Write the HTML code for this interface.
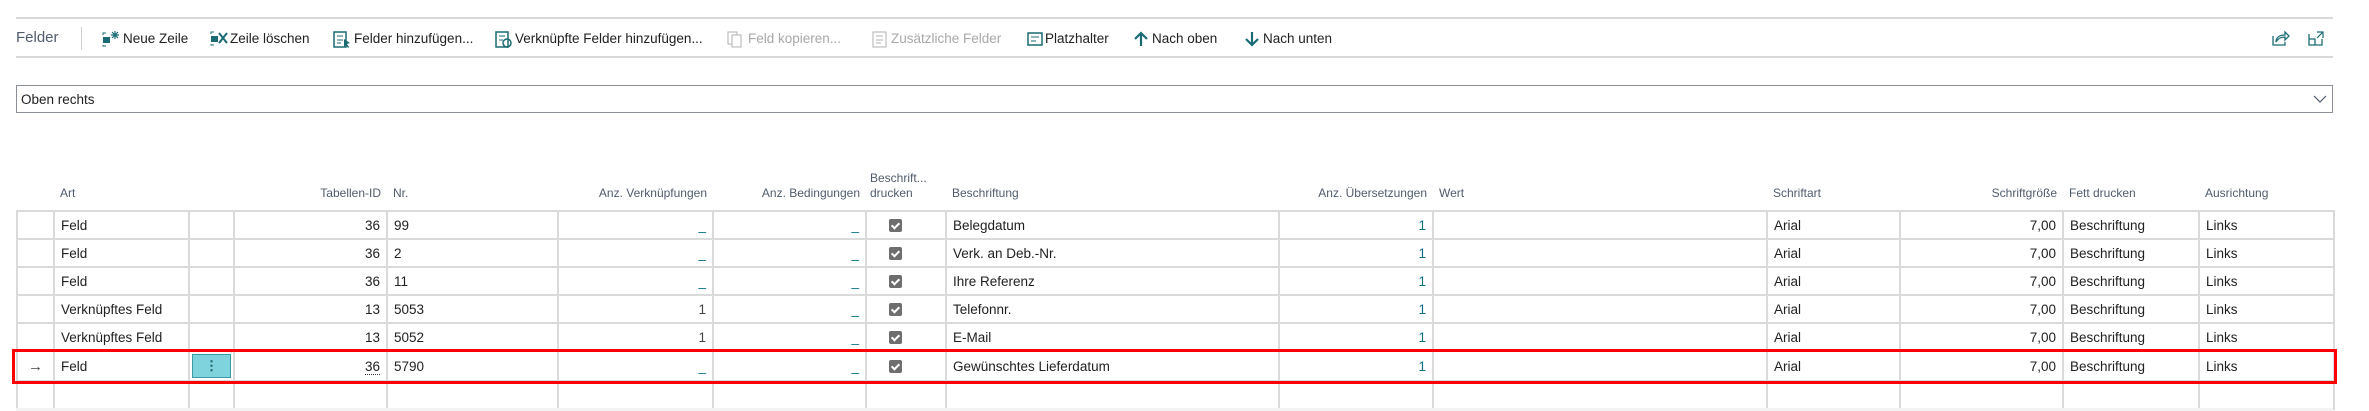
<!DOCTYPE html>
<html><head><meta charset="utf-8">
<style>
*{margin:0;padding:0;box-sizing:border-box}
body{width:2369px;height:411px;background:#fff;font-family:"Liberation Sans",sans-serif;color:#212121;position:relative;overflow:hidden}
.a{position:absolute;white-space:nowrap}
.hl{position:absolute;left:16px;width:2317px;height:2px;background:#d9d9d9}
.tb{font-size:13.5px;top:31px;color:#212121}
.dis{color:#a8a8a8}
.ic{position:absolute;top:31px}
table{position:absolute;left:16px;top:170px;border-collapse:collapse;table-layout:fixed;width:2317px}
th{font-weight:normal;font-size:12px;color:#505c6d;height:41px;vertical-align:bottom;padding:0 6px 9px 6px;text-align:left;white-space:nowrap;line-height:15px}
td{height:28px;border:2px solid #dadada;font-size:13.5px;padding:0 6px;white-space:nowrap;vertical-align:middle}
tr.h th{border:none}
tbody tr:first-child td{border-top:2px solid #dadada}
td:first-child{border-left:2px solid #dadada}
.r{text-align:right}
.u{text-align:right;color:#0b7285}
.cb{display:inline-block;width:13px;height:13px;background:#6e6e6e;border-radius:2px;position:relative;top:2px}
.cb:after{content:"";position:absolute;left:4px;top:2px;width:3px;height:6px;border:solid #fff;border-width:0 2px 2px 0;transform:rotate(45deg)}
</style></head><body>
<div class="hl" style="top:17px"></div>
<div class="hl" style="top:56px"></div>
<div class="a" style="left:16px;top:29px;font-size:15px;color:#505c6d">Felder</div>
<div class="a" style="left:81px;top:27px;width:1px;height:23px;background:#d0d0d0"></div>

<svg class="ic" style="left:102px" width="18" height="16" viewBox="0 0 18 16"><rect x="1" y="6" width="7" height="6" fill="#1a6b73"/><path d="M1 4v-2h3M1 14v1h3" stroke="#1a6b73" fill="none"/><path d="M13 0v8M9 4h8M10 1l6 6M16 1l-6 6" stroke="#1a6b73" stroke-width="1.2"/></svg>
<div class="a tb" style="left:123px">Neue Zeile</div>
<svg class="ic" style="left:210px" width="18" height="16" viewBox="0 0 18 16"><rect x="1" y="5" width="7" height="6" fill="#1a6b73"/><path d="M1 3v-2h3M1 13v1h3" stroke="#1a6b73" fill="none"/><path d="M9 2l8 10M17 2l-8 10" stroke="#1a6b73" stroke-width="2"/></svg>
<div class="a tb" style="left:230px">Zeile löschen</div>
<svg class="ic" style="left:333px" width="18" height="17" viewBox="0 0 18 17"><rect x="1" y="1" width="12" height="15" fill="none" stroke="#1a6b73" stroke-width="1.5"/><path d="M4 5h6M4 9h6M4 12h4" stroke="#1a6b73"/><path d="M11 8l6 4-3 1 2 3-1 1-2-3-2 2z" fill="#1a6b73"/></svg>
<div class="a tb" style="left:354px">Felder hinzufügen...</div>
<svg class="ic" style="left:495px" width="18" height="17" viewBox="0 0 18 17"><rect x="1" y="1" width="12" height="15" fill="none" stroke="#1a6b73" stroke-width="1.5"/><path d="M4 5h6M4 9h4" stroke="#1a6b73"/><circle cx="12" cy="12" r="4" fill="none" stroke="#1a6b73" stroke-width="1.5"/></svg>
<div class="a tb" style="left:515px">Verknüpfte Felder hinzufügen...</div>
<svg class="ic" style="left:727px" width="16" height="17" viewBox="0 0 16 17"><rect x="1" y="1" width="9" height="12" fill="none" stroke="#b0b0b0"/><rect x="5" y="4" width="9" height="12" fill="#fff" stroke="#b0b0b0"/></svg>
<div class="a tb dis" style="left:748px">Feld kopieren...</div>
<svg class="ic" style="left:872px" width="16" height="17" viewBox="0 0 16 17"><rect x="1" y="1" width="13" height="15" fill="none" stroke="#b0b0b0"/><path d="M4 5h7M4 9h7M4 12h5" stroke="#b0b0b0"/></svg>
<div class="a tb dis" style="left:891px">Zusätzliche Felder</div>
<svg class="ic" style="left:1027px" width="16" height="16" viewBox="0 0 16 16"><rect x="1" y="2" width="14" height="12" fill="none" stroke="#1a6b73" stroke-width="1.5"/><path d="M4 6h8M4 10h5" stroke="#1a6b73"/></svg>
<div class="a tb" style="left:1045px">Platzhalter</div>
<svg class="ic" style="left:1134px" width="14" height="16" viewBox="0 0 14 16"><path d="M7 15V2M1 8l6-6 6 6" stroke="#1a6b73" stroke-width="2.2" fill="none"/></svg>
<div class="a tb" style="left:1152px">Nach oben</div>
<svg class="ic" style="left:1245px" width="14" height="16" viewBox="0 0 14 16"><path d="M7 1v13M1 8l6 6 6-6" stroke="#1a6b73" stroke-width="2.2" fill="none"/></svg>
<div class="a tb" style="left:1263px">Nach unten</div>

<svg class="a" style="left:2272px;top:30px" width="18" height="16" viewBox="0 0 18 16"><path d="M1 6v9h12v-3" stroke="#1a6b73" stroke-width="1.3" fill="none"/><path d="M4 12c0-5 4-7 9-7V2l4 4-4 4V7c-4 0-7 1-9 5z" fill="none" stroke="#1a6b73" stroke-width="1.3"/></svg>
<svg class="a" style="left:2308px;top:31px" width="16" height="15" viewBox="0 0 16 15"><path d="M1 3v11h13V8M1 8h6v6" stroke="#1a6b73" stroke-width="1.3" fill="none"/><path d="M9 1h6v6M15 1l-6 6" stroke="#1a6b73" stroke-width="1.2" fill="none"/></svg>

<div class="a" style="left:16px;top:85px;width:2317px;height:28px;border:1px solid #8a8f99"></div>
<div class="a" style="left:21px;top:92px;font-size:13.5px">Oben rechts</div>
<svg class="a" style="left:2313px;top:95px" width="14" height="9" viewBox="0 0 14 9"><path d="M1 1l6 6 6-6" stroke="#505c6d" stroke-width="1.2" fill="none"/></svg>

<table>
<colgroup><col style="width:37px"><col style="width:135px"><col style="width:45px"><col style="width:153px"><col style="width:171px"><col style="width:155px"><col style="width:153px"><col style="width:80px"><col style="width:333px"><col style="width:154px"><col style="width:334px"><col style="width:133px"><col style="width:163px"><col style="width:136px"><col style="width:135px"></colgroup>
<thead><tr class="h"><th></th><th>Art</th><th></th><th style="text-align:right">Tabellen-ID</th><th>Nr.</th><th style="text-align:right">Anz. Verknüpfungen</th><th style="text-align:right">Anz. Bedingungen</th><th style="padding-left:4px">Beschrift...<br>drucken</th><th>Beschriftung</th><th style="text-align:right">Anz. Übersetzungen</th><th>Wert</th><th>Schriftart</th><th style="text-align:right">Schriftgröße</th><th>Fett drucken</th><th>Ausrichtung</th></tr></thead>
<tbody>
<tr><td></td><td>Feld</td><td></td><td class="r">36</td><td>99</td><td class="u">_</td><td class="u">_</td><td style="padding-left:22px"><span class="cb"></span></td><td>Belegdatum</td><td class="u">1</td><td></td><td>Arial</td><td class="r">7,00</td><td>Beschriftung</td><td>Links</td></tr>
<tr><td></td><td>Feld</td><td></td><td class="r">36</td><td>2</td><td class="u">_</td><td class="u">_</td><td style="padding-left:22px"><span class="cb"></span></td><td>Verk. an Deb.-Nr.</td><td class="u">1</td><td></td><td>Arial</td><td class="r">7,00</td><td>Beschriftung</td><td>Links</td></tr>
<tr><td></td><td>Feld</td><td></td><td class="r">36</td><td>11</td><td class="u">_</td><td class="u">_</td><td style="padding-left:22px"><span class="cb"></span></td><td>Ihre Referenz</td><td class="u">1</td><td></td><td>Arial</td><td class="r">7,00</td><td>Beschriftung</td><td>Links</td></tr>
<tr><td></td><td>Verknüpftes Feld</td><td></td><td class="r">13</td><td>5053</td><td class="r" style="color:#444">1</td><td class="u">_</td><td style="padding-left:22px"><span class="cb"></span></td><td>Telefonnr.</td><td class="u">1</td><td></td><td>Arial</td><td class="r">7,00</td><td>Beschriftung</td><td>Links</td></tr>
<tr><td></td><td>Verknüpftes Feld</td><td></td><td class="r">13</td><td>5052</td><td class="r" style="color:#444">1</td><td class="u">_</td><td style="padding-left:22px"><span class="cb"></span></td><td>E-Mail</td><td class="u">1</td><td></td><td>Arial</td><td class="r">7,00</td><td>Beschriftung</td><td>Links</td></tr>
<tr><td style="text-align:center;font-size:15px;color:#444">→</td><td>Feld</td><td style="padding:2px"><div style="background:#7fd3dc;border:1px solid #3a9aa5;height:24px;text-align:center;line-height:22px;font-weight:bold;color:#1a5a60">⋮</div></td><td class="r"><span style="border-bottom:1px dotted #333">36</span></td><td>5790</td><td class="u">_</td><td class="u">_</td><td style="padding-left:22px"><span class="cb"></span></td><td>Gewünschtes Lieferdatum</td><td class="u">1</td><td></td><td>Arial</td><td class="r">7,00</td><td>Beschriftung</td><td>Links</td></tr>
<tr><td></td><td></td><td></td><td></td><td></td><td></td><td></td><td></td><td></td><td></td><td></td><td></td><td></td><td></td><td></td></tr>
</tbody></table>
<div class="a" style="left:16px;top:408px;width:2317px;height:3px;background:#f3f3f3"></div>
<div class="a" style="left:12px;top:349px;width:2325px;height:35px;border:3px solid #f00"></div>
</body></html>
